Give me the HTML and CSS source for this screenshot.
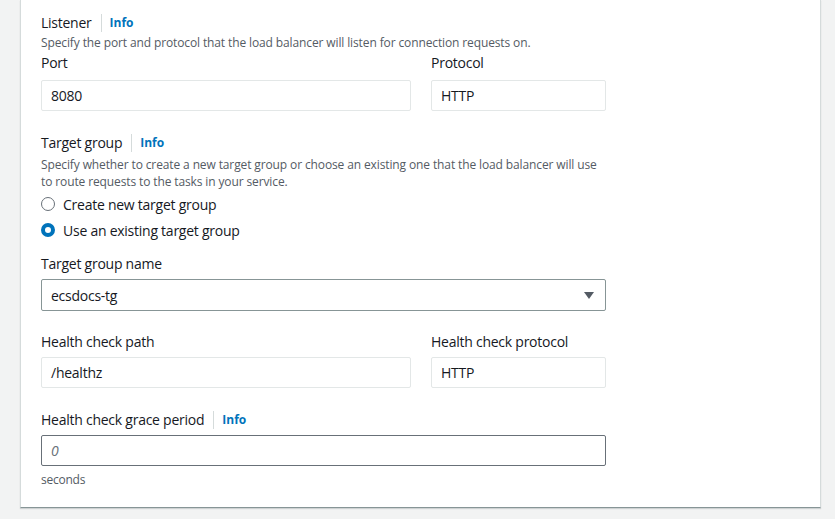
FILE: index.html
```html
<!DOCTYPE html>
<html>
<head>
<meta charset="utf-8">
<link rel="stylesheet" href="styles.css">
</head>
<body>
<div class="card">
  <div class="header">
    <span class="title">Listener</span>
    <span class="divider"></span>
    <a class="info">Info</a>
  </div>
  <p class="desc">Specify the port and protocol that the load balancer will listen for connection requests on.</p>
  <div class="row row-port">
    <div class="field">
      <div class="label">Port</div>
      <div class="input readonly">8080</div>
    </div>
    <div class="field">
      <div class="label">Protocol</div>
      <div class="input readonly">HTTP</div>
    </div>
  </div>

  <div class="header header-tg">
    <span class="title">Target group</span>
    <span class="divider"></span>
    <a class="info">Info</a>
  </div>
  <p class="desc desc-two">Specify whether to create a new target group or choose an existing one that the load balancer will use<br>to route requests to the tasks in your service.</p>
  <div class="radios">
    <div class="radio"><span class="dot"></span><span>Create new target group</span></div>
    <div class="radio"><span class="dot checked"></span><span>Use an existing target group</span></div>
  </div>

  <div class="label label-tgn">Target group name</div>
  <div class="select">
    <span>ecsdocs-tg</span>
    <span class="caret"></span>
  </div>

  <div class="row row-hc">
    <div class="field">
      <div class="label">Health check path</div>
      <div class="input readonly">/healthz</div>
    </div>
    <div class="field">
      <div class="label">Health check protocol</div>
      <div class="input readonly">HTTP</div>
    </div>
  </div>

  <div class="header header-grace">
    <span class="title">Health check grace period</span>
    <span class="divider"></span>
    <a class="info">Info</a>
  </div>
  <div class="input editable"><span class="placeholder">0</span></div>
  <div class="hint">seconds</div>
</div>
</body>
</html>
```

FILE: styles.css
```css
html, body {
  margin: 0;
  padding: 0;
}
body {
  background: #f2f3f3;
  font-family: "Open Sans", "Noto Sans", Arial, sans-serif;
  color: #16191f;
  width: 835px;
  height: 519px;
  overflow: hidden;
}
.card {
  margin-left: 20px;
  width: 801px;
  height: 508px;
  box-sizing: border-box;
  background: #fff;
  border-left: 1px solid #d5dbdb;
  border-right: 1px solid #d5dbdb;
  border-bottom: 1px solid #879596;
  box-shadow: 0 1px 1px rgba(0,28,36,0.15);
  padding: 12px 20px 0 20px;
  letter-spacing: -0.25px;
}
.header {
  display: flex;
  align-items: center;
  height: 22px;
}
.title {
  font-size: 14px;
  line-height: 22px;
}
.divider {
  width: 1px;
  height: 18px;
  background: #d5dbdb;
  margin: 0 8px 0 9px;
}
.info {
  font-size: 12px;
  font-weight: 700;
  color: #0073bb;
  line-height: 22px;
  letter-spacing: 0;
}
.desc {
  margin: 0;
  font-size: 12px;
  line-height: 17px;
  color: #545b64;
  letter-spacing: -0.12px;
}
.row {
  display: grid;
  grid-template-columns: 370px 175px;
  column-gap: 20px;
}
.row-port {
  margin-top: 1px;
}
.label {
  font-size: 14px;
  line-height: 22px;
  height: 22px;
}
.field .label {
  margin-bottom: 6px;
}
.input {
  box-sizing: border-box;
  height: 31px;
  border-radius: 2px;
  font-size: 14px;
  line-height: 29px;
  padding: 0 9px;
}
.readonly {
  border: 1px solid #e3e7e7;
  color: #16191f;
}
.header-tg {
  margin-top: 21px;
}
.desc-two {
  margin-top: 2px;
}
.radios {
  display: flex;
  flex-direction: column;
  gap: 4px;
  margin-top: 3px;
}
.radio {
  display: flex;
  align-items: center;
  height: 22px;
  font-size: 14px;
  gap: 8px;
}
.dot {
  width: 14px;
  height: 14px;
  box-sizing: border-box;
  border-radius: 50%;
  border: 1.5px solid #687078;
  background: #fff;
}
.dot.checked {
  border: 4px solid #0073bb;
}
.label-tgn {
  margin-top: 12px;
  margin-bottom: 4px;
}
.select {
  box-sizing: border-box;
  width: 565px;
  height: 32px;
  border: 1px solid #879596;
  border-radius: 2px;
  display: flex;
  align-items: center;
  justify-content: space-between;
  padding: 0 11px 0 9px;
  font-size: 14px;
}
.caret {
  width: 0;
  height: 0;
  border-left: 5px solid transparent;
  border-right: 5px solid transparent;
  border-top: 7px solid #545b64;
}
.row-hc {
  margin-top: 20px;
}
.row-hc .field .label {
  margin-bottom: 4px;
}
.header-grace {
  margin-top: 21px;
  margin-bottom: 4px;
}
.editable {
  width: 565px;
  border: 1px solid #687078;
}
.placeholder {
  color: #687078;
  font-style: italic;
}
.hint {
  font-size: 12px;
  line-height: 17px;
  color: #545b64;
  margin-top: 5px;
}
```
